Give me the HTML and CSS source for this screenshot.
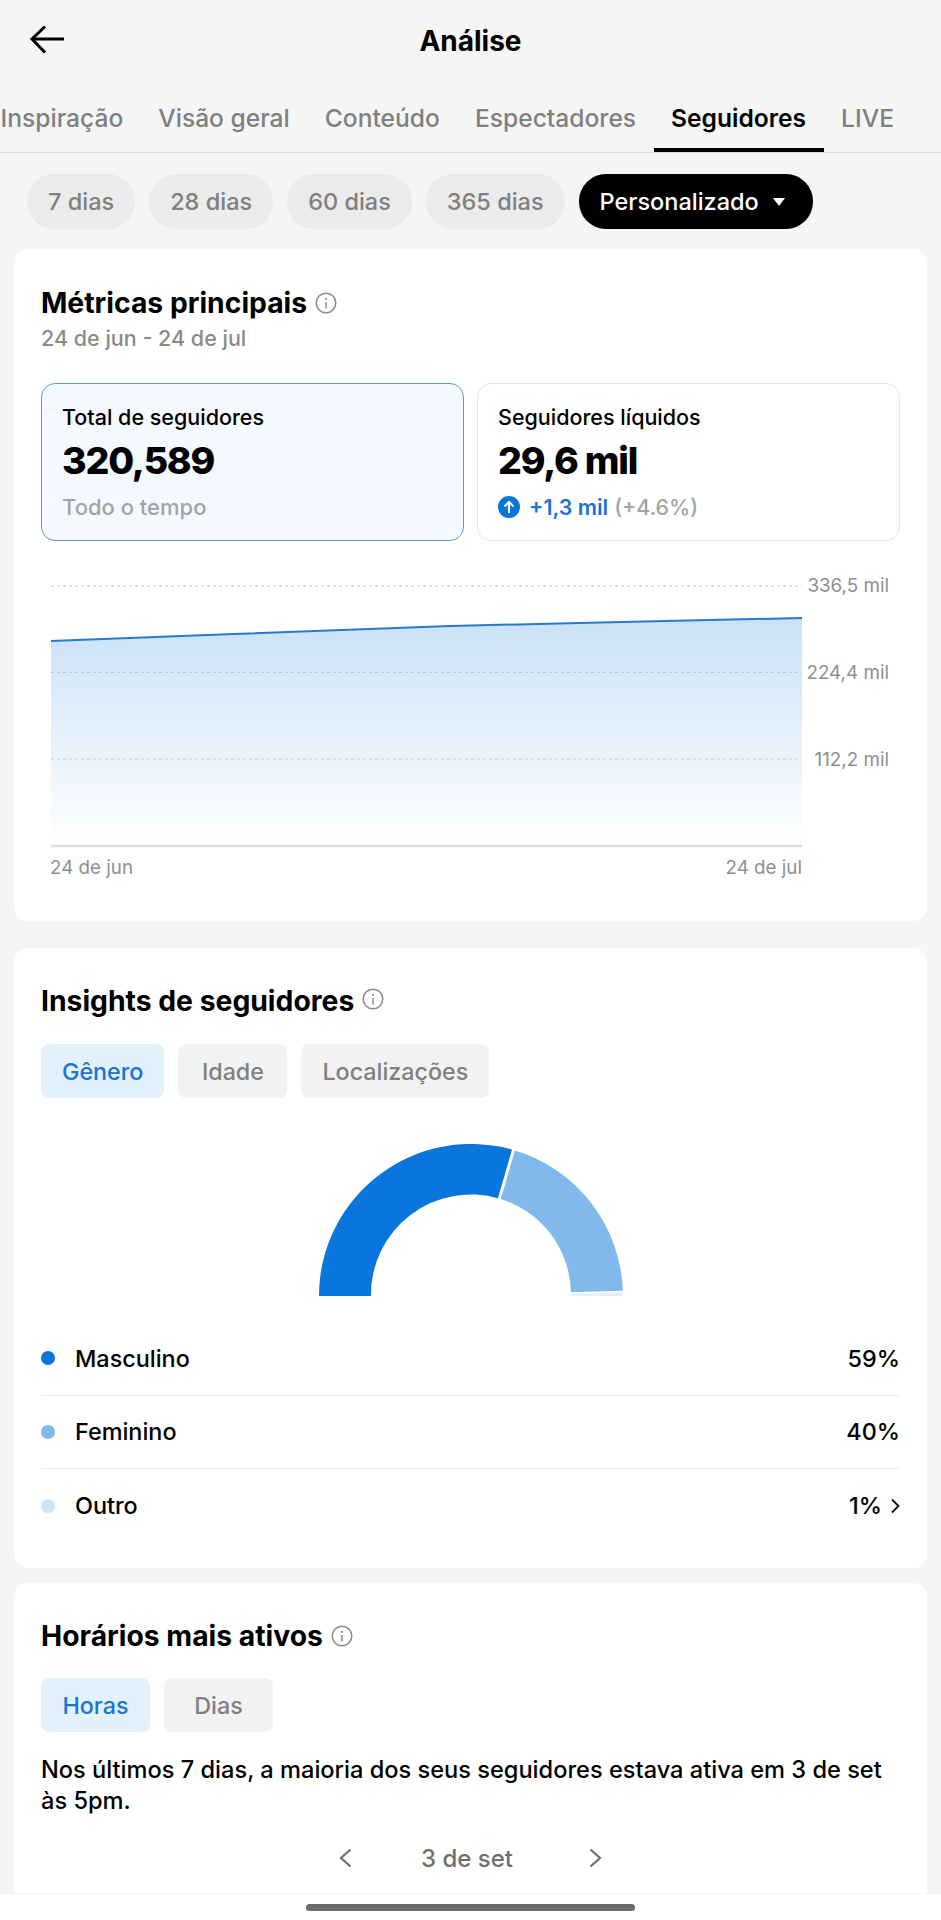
FILE: index.html
```html
<!DOCTYPE html>
<html lang="pt">
<head>
<meta charset="utf-8">
<title>Análise</title>
<link rel="stylesheet" href="styles.css">
</head>
<body>
<div class="page">
  <header class="topbar">
    <svg class="back" width="36" height="30" viewBox="0 0 36 30"><path d="M35 14H3M16 1.500 3 14l13 13.500" fill="none" stroke="#000" stroke-width="3"/></svg>
    <h1 class="page-title">Análise</h1>
  </header>
  <nav class="tabs">
    <span class="tab">Inspiração</span>
    <span class="tab">Visão geral</span>
    <span class="tab">Conteúdo</span>
    <span class="tab">Espectadores</span>
    <span class="tab tab-active">Seguidores</span>
    <span class="tab">LIVE</span>
  </nav>
  <div class="pills">
    <span class="pill">7 dias</span>
    <span class="pill">28 dias</span>
    <span class="pill">60 dias</span>
    <span class="pill">365 dias</span>
    <span class="pill pill-active">Personalizado<svg class="caret" width="12" height="8" viewBox="0 0 12 8"><path d="M0 0h12L6 8z" fill="#fff"/></svg></span>
  </div>

  <section class="card card-metrics">
    <h2 class="card-title">Métricas principais
      <svg class="info" width="22" height="22" viewBox="0 0 22 22"><circle cx="11" cy="11" r="9.800" fill="none" stroke="#8a8a8a" stroke-width="1.500"/><circle cx="11" cy="6.800" r="1.100" fill="#8a8a8a"/><path d="M11 10v6.500" stroke="#8a8a8a" stroke-width="1.500"/></svg>
    </h2>
    <p class="range">24 de jun - 24 de jul</p>
    <div class="metrics">
      <div class="metric metric-active">
        <div class="metric-label">Total de seguidores</div>
        <div class="metric-value">320,589</div>
        <div class="metric-sub metric-sub-plain">Todo o tempo</div>
      </div>
      <div class="metric">
        <div class="metric-label">Seguidores líquidos</div>
        <div class="metric-value">29,6 mil</div>
        <div class="metric-sub">
          <svg class="up" width="22" height="22" viewBox="0 0 22 22"><circle cx="11" cy="11" r="11" fill="#0b75dc"/><path d="M11 17V6M6.500 10.500 11 6l4.500 4.500" fill="none" stroke="#fff" stroke-width="2"/></svg>
          <span class="delta">+1,3 mil</span> <span>(+4.6%)</span>
        </div>
      </div>
    </div>
    <svg class="chart" width="857" height="310" viewBox="0 0 857 310">
      <defs>
        <linearGradient id="area" x1="0" y1="0" x2="0" y2="1">
          <stop offset="0" stop-color="#c9e1f7"/>
          <stop offset="1" stop-color="#ffffff"/>
        </linearGradient>
      </defs>
      <path d="M9 71 192 64 408 56 558 52.500 760 48V276H9z" fill="url(#area)"/>
      <path d="M9 16H760M9 102.500H760M9 189H760" stroke="#c6c6c6" stroke-width="1" stroke-dasharray="3 3" fill="none"/>
      <path d="M9 71 192 64 408 56 558 52.500 760 48" stroke="#2a78cf" stroke-width="2" fill="none"/>
      <path d="M9 276H760" stroke="#dcdcdc" stroke-width="2.500"/>
      <text class="chart-label" x="847" y="21.500" text-anchor="end">336,5 mil</text>
      <text class="chart-label" x="847" y="109" text-anchor="end">224,4 mil</text>
      <text class="chart-label" x="847" y="195.500" text-anchor="end">112,2 mil</text>
      <text class="chart-label" x="8" y="304">24 de jun</text>
      <text class="chart-label" x="760" y="304" text-anchor="end">24 de jul</text>
    </svg>
  </section>

  <section class="card card-insights">
    <h2 class="card-title">Insights de seguidores
      <svg class="info info-high" width="22" height="22" viewBox="0 0 22 22"><circle cx="11" cy="11" r="9.800" fill="none" stroke="#8a8a8a" stroke-width="1.500"/><circle cx="11" cy="6.800" r="1.100" fill="#8a8a8a"/><path d="M11 10v6.500" stroke="#8a8a8a" stroke-width="1.500"/></svg>
    </h2>
    <div class="seg">
      <span class="seg-item seg-active">Gênero</span>
      <span class="seg-item">Idade</span>
      <span class="seg-item">Localizações</span>
    </div>
    <svg class="donut" width="304" height="152" viewBox="0 0 304 152">
      <path d="M0 152A152 152 0 0 1 194.400 6L180 54.500A100 100 0 0 0 52 152z" fill="#0a75dc"/>
      <path d="M194.400 6A152 152 0 0 1 303.900 147.500L252 148.800A100 100 0 0 0 180 54.500z" fill="#82b9ec"/>
      <path d="M252 148.800 304 147.500 304 152H252z" fill="#e4effb"/>
      <path d="M194.600 5.500 180.300 54.800" stroke="#fff" stroke-width="3"/>
      <path d="M251.500 149 304 147.600" stroke="#fff" stroke-width="1.500"/>
    </svg>
    <ul class="legend">
      <li class="legend-row"><i class="dot dot-male"></i><span class="legend-name">Masculino</span><span class="legend-val">59%</span></li>
      <li class="legend-row"><i class="dot dot-female"></i><span class="legend-name">Feminino</span><span class="legend-val">40%</span></li>
      <li class="legend-row"><i class="dot dot-other"></i><span class="legend-name">Outro</span><span class="legend-val">1%</span><svg class="chev" width="9" height="16" viewBox="0 0 9 16"><path d="M1 1.500 7.500 8 1 14.500" fill="none" stroke="#111" stroke-width="1.800"/></svg></li>
    </ul>
  </section>

  <section class="card card-hours">
    <h2 class="card-title">Horários mais ativos
      <svg class="info" width="22" height="22" viewBox="0 0 22 22"><circle cx="11" cy="11" r="9.800" fill="none" stroke="#8a8a8a" stroke-width="1.500"/><circle cx="11" cy="6.800" r="1.100" fill="#8a8a8a"/><path d="M11 10v6.500" stroke="#8a8a8a" stroke-width="1.500"/></svg>
    </h2>
    <div class="seg">
      <span class="seg-item seg-active">Horas</span>
      <span class="seg-item">Dias</span>
    </div>
    <p class="summary">Nos últimos 7 dias, a maioria dos seus seguidores estava ativa em 3 de set às 5pm.</p>
    <div class="date-nav">
      <svg width="13" height="20" viewBox="0 0 13 20"><path d="M11.500 1.500 2 10l9.500 8.500" fill="none" stroke="#6f6f6f" stroke-width="2.200"/></svg>
      <span class="date-label">3 de set</span>
      <svg width="13" height="20" viewBox="0 0 13 20"><path d="M1.500 1.500 11 10l-9.500 8.500" fill="none" stroke="#6f6f6f" stroke-width="2.200"/></svg>
    </div>
  </section>

  <div class="homebar"><span class="home-indicator"></span></div>
</div>
</body>
</html>
```

FILE: styles.css
```css
* { box-sizing: border-box; }
html, body { margin: 0; padding: 0; }
body { background: #f5f5f5; font-family: Inter, "Liberation Sans", sans-serif; color: #000; }
.page { position: relative; width: 941px; height: 1920px; overflow: hidden; background: #f5f5f5; }

.topbar { position: relative; height: 82px; display: flex; align-items: center; justify-content: center; }
.back { position: absolute; left: 29px; top: 25px; }
.page-title { margin: 0; font-size: 28px; line-height: 34px; font-weight: 700; }

.tabs { display: flex; height: 71px; margin-left: -17px; border-bottom: 1px solid #dedede; white-space: nowrap; overflow: hidden; }
.tab { flex: none; height: 70px; padding: 6px 17.500px 0; display: flex; align-items: center; font-size: 24.600px; font-weight: 500; color: #808080; border-bottom: 4px solid transparent; }
.tab-active { color: #000; border-bottom-color: #000; font-weight: 600; }

.pills { display: flex; gap: 14px; margin-top: 21px; padding-left: 27px; }
.pill { height: 55px; padding: 0 21px; border-radius: 27px; display: flex; align-items: center; background: #ebebeb; color: #808080; font-size: 23.500px; font-weight: 500; }
.pill-active { background: #000; color: #fff; padding-right: 28px; }
.caret { margin-left: 14px; }

.card { margin: 0 14px; padding: 36px 27px 0; background: #fff; border-radius: 14px; }
.card-metrics { margin-top: 20px; height: 672px; padding-top: 37px; }
.card-insights { margin-top: 27px; height: 620px; }
.card-hours { margin-top: 15px; height: 400px; }

.card-title { margin: 0; display: flex; align-items: center; gap: 8px; font-size: 28.300px; line-height: 34px; font-weight: 700; }
.info-high { position: relative; top: -2px; }
.range { margin: 4px 0 0; font-size: 21.500px; line-height: 28px; font-weight: 500; color: #8a8a8a; }

.metrics { display: grid; grid-template-columns: 1fr 1fr; gap: 13px; margin-top: 31px; }
.metric { height: 158px; padding: 19px 20px 0; border: 1px solid #e6e6e6; border-radius: 14px; background: #fff; }
.metric-active { background: #f4f9ff; border-color: #5f9bbd; }
.metric-label { font-size: 21.500px; line-height: 28px; font-weight: 500; }
.metric-value { margin-top: 8px; font-size: 37.500px; line-height: 44px; font-weight: 800; letter-spacing: -1.200px; }
.metric-sub { margin-top: 10px; display: flex; align-items: center; gap: 6px; font-size: 21.400px; line-height: 28px; font-weight: 500; color: #a3a3a3; }
.metric-sub-plain { font-size: 22px; }
.up { margin-right: 3px; }
.delta { color: #1a74d2; font-weight: 600; }

.chart { display: block; margin: 29px 0 0 1px; }
.chart-label { font-size: 18.800px; fill: #8f8f8f; }

.seg { display: flex; gap: 14px; margin-top: 26px; }
.seg-item { height: 54px; min-width: 109px; padding: 0 21px; border-radius: 8px; display: flex; align-items: center; justify-content: center; background: #f2f2f2; color: #808080; font-size: 23.300px; font-weight: 500; }
.seg-active { background: #e3f1fb; color: #1a74d2; }
.card-hours .seg { margin-top: 25px; }

.donut { display: block; margin: 46px auto 0; }

.legend { list-style: none; margin: 26px 0 0; padding: 0; }
.legend-row { height: 73.500px; display: flex; align-items: center; border-bottom: 1px solid #ebebeb; font-size: 23.400px; font-weight: 500; }
.legend-row:last-child { border-bottom: 0; }
.dot { width: 14px; height: 14px; border-radius: 50%; margin-right: 20px; flex: none; }
.dot-male { background: #0a75dc; }
.dot-female { background: #82b9ec; }
.dot-other { background: #cfe3f8; }
.legend-name { flex: 1; }
.chev { margin-left: 9px; }

.summary { margin: 22px 0 0; font-size: 23.600px; line-height: 31px; font-weight: 500; }
.date-nav { display: flex; align-items: center; justify-content: center; gap: 69px; height: 40px; margin-top: 22px; }
.date-label { font-size: 24px; font-weight: 500; color: #6f6f6f; margin-right: 7px; }

.homebar { position: absolute; left: 0; right: 0; bottom: 0; height: 27px; background: #fff; display: flex; justify-content: center; padding-top: 10px; border-top: 1px solid #f4f4f4; }
.home-indicator { width: 329px; height: 7px; border-radius: 4px; background: #6b6b6b; }
```
